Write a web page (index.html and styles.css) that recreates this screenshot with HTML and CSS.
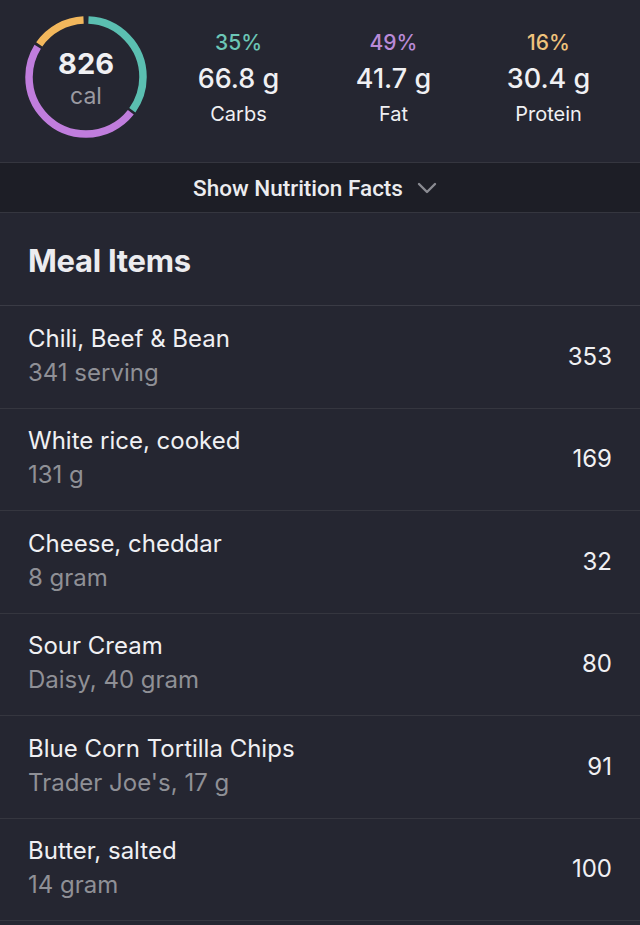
FILE: index.html
```html
<!DOCTYPE html>
<html>
<head>
<meta charset="utf-8">
<link rel="stylesheet" href="styles.css">
</head>
<body>
<div class="app">
  <section class="summary">
    <div class="ring">
      <svg class="ring-svg" viewBox="0 0 124 124" width="124" height="124">
        <g transform="rotate(-90 62 62)">
          <circle cx="62" cy="62" r="57" fill="none" stroke="#5bbfb1" stroke-width="7.5" pathLength="100" stroke-dasharray="34.2 65.8" stroke-dashoffset="-0.7"/>
          <circle cx="62" cy="62" r="57" fill="none" stroke="#c07ddd" stroke-width="7.5" pathLength="100" stroke-dasharray="48.3 51.7" stroke-dashoffset="-35.6"/>
          <circle cx="62" cy="62" r="57" fill="none" stroke="#f2b75c" stroke-width="7.5" pathLength="100" stroke-dasharray="14.6 85.4" stroke-dashoffset="-84.7"/>
        </g>
      </svg>
      <div class="ring-text">
        <div class="cal-num">826</div>
        <div class="cal-unit">cal</div>
      </div>
    </div>
    <div class="macros">
      <div class="macro">
        <div class="pct carbs">35%</div>
        <div class="grams">66.8 g</div>
        <div class="label">Carbs</div>
      </div>
      <div class="macro">
        <div class="pct fat">49%</div>
        <div class="grams">41.7 g</div>
        <div class="label">Fat</div>
      </div>
      <div class="macro">
        <div class="pct protein">16%</div>
        <div class="grams">30.4 g</div>
        <div class="label">Protein</div>
      </div>
    </div>
  </section>
  <div class="facts-bar">
    <span class="facts-text">Show Nutrition Facts</span>
    <svg class="chevron" viewBox="0 0 20 12" width="20" height="12"><path d="M2 2 L10 10 L18 2" fill="none" stroke="#8a8b92" stroke-width="2.4" stroke-linecap="round" stroke-linejoin="round"/></svg>
  </div>
  <div class="meal-header">Meal Items</div>
  <ul class="items">
    <li class="item"><div class="info"><div class="name">Chili, Beef &amp; Bean</div><div class="sub">341 serving</div></div><div class="kcal">353</div></li>
    <li class="item"><div class="info"><div class="name">White rice, cooked</div><div class="sub">131 g</div></div><div class="kcal">169</div></li>
    <li class="item"><div class="info"><div class="name">Cheese, cheddar</div><div class="sub">8 gram</div></div><div class="kcal">32</div></li>
    <li class="item"><div class="info"><div class="name">Sour Cream</div><div class="sub">Daisy, 40 gram</div></div><div class="kcal">80</div></li>
    <li class="item"><div class="info"><div class="name">Blue Corn Tortilla Chips</div><div class="sub">Trader Joe's, 17 g</div></div><div class="kcal">91</div></li>
    <li class="item"><div class="info"><div class="name">Butter, salted</div><div class="sub">14 gram</div></div><div class="kcal">100</div></li>
  </ul>
</div>
</body>
</html>
```
FILE: styles.css
```css
* { box-sizing: border-box; }
html, body {
  margin: 0;
  padding: 0;
  background: #252631;
}
body {
  font-family: Inter, "Noto Sans", sans-serif;
  color: #f0f0f3;
  width: 640px;
  height: 925px;
  overflow: hidden;
}
.summary {
  height: 163px;
  display: flex;
  align-items: flex-start;
  padding: 15px 0 0 24px;
  border-bottom: 1px solid #35363f;
}
.ring {
  position: relative;
  width: 124px;
  height: 124px;
  flex: none;
}
.ring-svg { display: block; }
.ring-text {
  position: absolute;
  inset: 0;
  display: flex;
  flex-direction: column;
  align-items: center;
  justify-content: center;
  padding-top: 6px;
}
.cal-num {
  font-size: 29px;
  font-weight: 700;
  line-height: 32px;
}
.cal-unit {
  font-size: 23px;
  color: #9a9aa1;
  line-height: 32px;
}
.macros {
  display: flex;
  margin-left: 13px;
  padding-top: 10px;
}
.macro {
  width: 155px;
  display: flex;
  flex-direction: column;
  align-items: center;
}
.pct {
  font-size: 21px;
  font-weight: 500;
  line-height: 35px;
}
.pct.carbs { color: #6cc6b6; }
.pct.fat { color: #b98ad8; }
.pct.protein { color: #f0c37c; }
.grams {
  font-size: 27px;
  font-weight: 500;
  line-height: 35px;
  margin-top: 1px;
}
.label {
  font-size: 20px;
  line-height: 35px;
  margin-top: 1px;
}
.facts-bar {
  height: 50px;
  background: #1d1e26;
  border-bottom: 1px solid #35363f;
  display: flex;
  align-items: center;
  justify-content: center;
  gap: 14px;
  padding-right: 10px;
}
.facts-text {
  font-family: Roboto, "Noto Sans", sans-serif;
  font-size: 22.5px;
  font-weight: 500;
  color: #ececef;
}
.chevron { display: block; margin-top: 1px; }
.meal-header {
  height: 93px;
  display: flex;
  align-items: center;
  padding-left: 28px;
  padding-top: 3px;
  font-size: 31px;
  font-weight: 700;
  letter-spacing: -0.3px;
  color: #ececef;
  border-bottom: 1px solid #3a3b45;
}
.items {
  list-style: none;
  margin: 0;
  padding: 0;
}
.item {
  height: 102.5px;
  display: flex;
  align-items: center;
  justify-content: space-between;
  padding: 0 28px;
  border-bottom: 1px solid #35363f;
}
.info {
  display: flex;
  flex-direction: column;
  gap: 6px;
  padding-bottom: 2px;
}
.name {
  font-size: 24px;
  line-height: 28px;
  color: #f0f0f3;
}
.sub {
  font-size: 24px;
  line-height: 28px;
  color: #8f9096;
}
.kcal {
  font-size: 24px;
  line-height: 28px;
  color: #f0f0f3;
}
```
